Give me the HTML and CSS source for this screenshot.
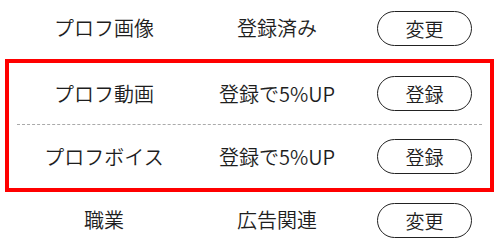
FILE: index.html
```html
<!DOCTYPE html>
<html lang="ja">
<head>
<meta charset="utf-8">
<link rel="stylesheet" href="styles.css">
</head>
<body>
<div class="list">
  <div class="row row-top">
    <div class="label">プロフ画像</div>
    <div class="status">登録済み</div>
    <button class="btn">変更</button>
  </div>
  <div class="highlight">
    <div class="row row-in row-a">
      <div class="label">プロフ動画</div>
      <div class="status">登録で5%UP</div>
      <button class="btn">登録</button>
    </div>
    <div class="divider"></div>
    <div class="row row-in row-b">
      <div class="label">プロフボイス</div>
      <div class="status">登録で5%UP</div>
      <button class="btn">登録</button>
    </div>
  </div>
  <div class="row row-bottom">
    <div class="label">職業</div>
    <div class="status">広告関連</div>
    <button class="btn">変更</button>
  </div>
</div>
</body>
</html>
```
FILE: styles.css
```css
html, body {
  margin: 0;
  padding: 0;
  background: #fff;
}
body {
  width: 500px;
  height: 250px;
  overflow: hidden;
  font-family: "Noto Sans CJK JP", "Noto Sans", sans-serif;
  font-weight: 350;
  color: #1e1e1e;
}
.list {
  display: flex;
  flex-direction: column;
}
.row {
  display: grid;
  grid-template-columns: 208px 138px 1fr;
  align-items: center;
}
.row .btn {
  margin-left: 31px;
}
.row-top {
  height: 56px;
  margin-bottom: 3px;
}
.row-bottom {
  height: 56px;
}
.row-in {
  grid-template-columns: 190px 156px 1fr;
}
.row-in .btn {
  margin-left: 22px;
}
.row-a {
  height: 61px;
}
.row-b {
  height: 63px;
}
.label, .status {
  font-size: 20px;
  text-align: center;
  white-space: nowrap;
  line-height: 1;
}
.btn {
  justify-self: start;
  width: 95px;
  height: 35px;
  box-sizing: border-box;
  border: 1.3px solid #222;
  border-radius: 18px;
  background: #fff;
  font-family: inherit;
  font-weight: 350;
  font-size: 19px;
  color: #1e1e1e;
  padding: 0;
  line-height: 1;
}
.highlight {
  margin: 0 6px 0 5px;
  border: 4px solid #f00;
}
.divider {
  height: 0;
  margin: 0 8px;
  border-top: 1px dashed #aaa;
}
```
